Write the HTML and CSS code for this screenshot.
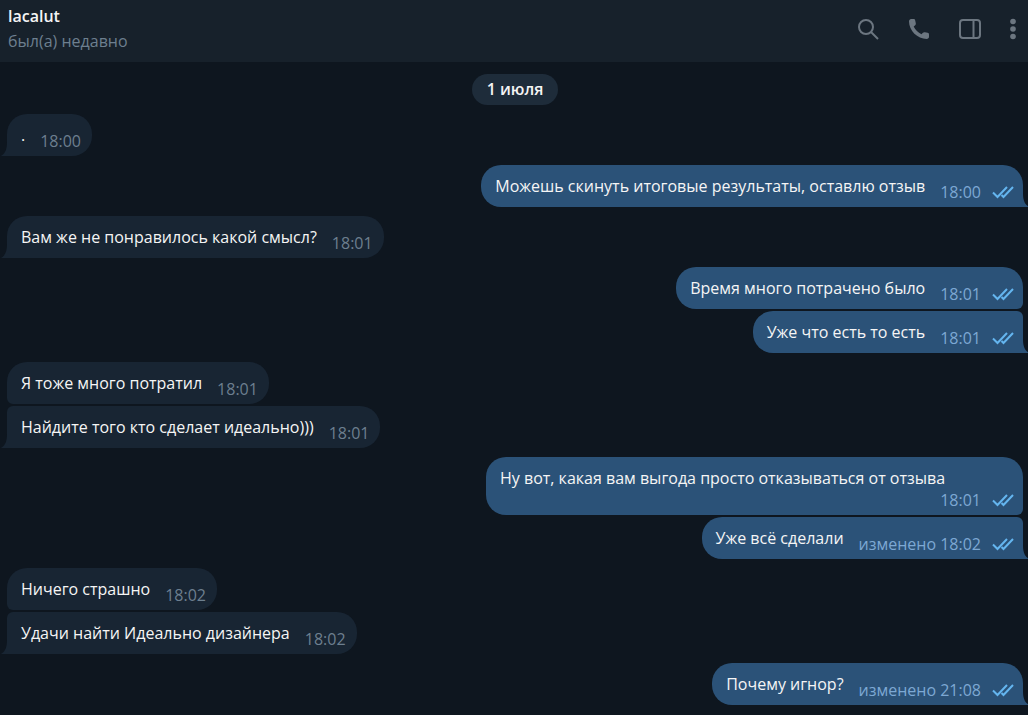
FILE: index.html
```html
<!DOCTYPE html>
<html lang="ru">
<head>
  <meta charset="UTF-8">
  <meta name="viewport" content="width=device-width, initial-scale=1">
  <title>lacalut</title>
  <link rel="stylesheet" href="styles.css">
</head>
<body>
  <!-- shared shapes -->
  <svg class="symbols" aria-hidden="true">
    <symbol id="checks" viewBox="0 0 22 14">
      <path d="M1 7.500l4.500 4.500L15 2M9.500 10l2 2L21 2" fill="none" stroke="currentColor" stroke-width="2"/>
    </symbol>
    <symbol id="tail" viewBox="0 0 8 14">
      <path d="M0 0h2c0 6 1 11 6 14H0z" fill="currentColor"/>
    </symbol>
  </svg>

  <header class="header">
    <div class="peer">
      <h1 class="peer-name">lacalut</h1>
      <p class="peer-status">был(а) недавно</p>
    </div>
    <div class="actions">
      <button type="button" class="icon-button" aria-label="Поиск">
        <svg width="24" height="24" viewBox="0 0 24 24" fill="none" stroke="currentColor" stroke-width="2">
          <circle cx="10" cy="10" r="7"/>
          <path d="M15 15l7 7"/>
        </svg>
      </button>
      <button type="button" class="icon-button" aria-label="Позвонить">
        <svg width="24" height="24" viewBox="0 0 24 24" fill="currentColor">
          <path d="M2 4.500C2 3 3 2 4.200 2h2.300c.9 0 1.500.5 1.700 1.400l.6 2.800c.2.800 0 1.500-.6 2L6.700 9.500c1.700 3.500 4.300 6.100 7.800 7.800l1.400-1.500c.5-.6 1.200-.8 2-.6l2.700.6c.9.200 1.400.8 1.400 1.700v2.300c0 1.300-1 2.200-2.300 2.200C10.500 22 2 13.500 2 4.500z"/>
        </svg>
      </button>
      <button type="button" class="icon-button" aria-label="Боковая панель">
        <svg width="24" height="24" viewBox="0 0 24 24" fill="none" stroke="currentColor" stroke-width="2">
          <rect x="2" y="3" width="20" height="18" rx="3"/>
          <path d="M15.500 3v18"/>
        </svg>
      </button>
      <button type="button" class="icon-button" aria-label="Меню">
        <svg width="8" height="24" viewBox="0 0 8 24" fill="currentColor">
          <circle cx="4" cy="4.500" r="2.800"/>
          <circle cx="4" cy="12" r="2.800"/>
          <circle cx="4" cy="19.500" r="2.800"/>
        </svg>
      </button>
    </div>
  </header>

  <main class="history">
    <div class="date">1 июля</div>

    <div class="group in">
      <div class="bubble">
        <p class="text">.</p>
        <div class="meta"><time>18:00</time></div>
        <svg class="tail"><use href="#tail"/></svg>
      </div>
    </div>

    <div class="group out">
      <div class="bubble">
        <p class="text">Можешь скинуть итоговые результаты, оставлю отзыв</p>
        <div class="meta"><time>18:00</time><svg class="checks"><use href="#checks"/></svg></div>
        <svg class="tail"><use href="#tail"/></svg>
      </div>
    </div>

    <div class="group in">
      <div class="bubble">
        <p class="text">Вам же не понравилось какой смысл?</p>
        <div class="meta"><time>18:01</time></div>
        <svg class="tail"><use href="#tail"/></svg>
      </div>
    </div>

    <div class="group out">
      <div class="bubble">
        <p class="text">Время много потрачено было</p>
        <div class="meta"><time>18:01</time><svg class="checks"><use href="#checks"/></svg></div>
      </div>
      <div class="bubble">
        <p class="text">Уже что есть то есть</p>
        <div class="meta"><time>18:01</time><svg class="checks"><use href="#checks"/></svg></div>
        <svg class="tail"><use href="#tail"/></svg>
      </div>
    </div>

    <div class="group in">
      <div class="bubble">
        <p class="text">Я тоже много потратил</p>
        <div class="meta"><time>18:01</time></div>
      </div>
      <div class="bubble">
        <p class="text">Найдите того кто сделает идеально)))</p>
        <div class="meta"><time>18:01</time></div>
        <svg class="tail"><use href="#tail"/></svg>
      </div>
    </div>

    <div class="group out">
      <div class="bubble bubble-wrapped">
        <p class="text">Ну вот, какая вам выгода просто отказываться от отзыва</p>
        <div class="meta"><time>18:01</time><svg class="checks"><use href="#checks"/></svg></div>
      </div>
      <div class="bubble">
        <p class="text">Уже всё сделали</p>
        <div class="meta"><span>изменено <time>18:02</time></span><svg class="checks"><use href="#checks"/></svg></div>
        <svg class="tail"><use href="#tail"/></svg>
      </div>
    </div>

    <div class="group in">
      <div class="bubble">
        <p class="text">Ничего страшно</p>
        <div class="meta"><time>18:02</time></div>
      </div>
      <div class="bubble">
        <p class="text">Удачи найти Идеально дизайнера</p>
        <div class="meta"><time>18:02</time></div>
        <svg class="tail"><use href="#tail"/></svg>
      </div>
    </div>

    <div class="group out">
      <div class="bubble">
        <p class="text">Почему игнор?</p>
        <div class="meta"><span>изменено <time>21:08</time></span><svg class="checks"><use href="#checks"/></svg></div>
        <svg class="tail"><use href="#tail"/></svg>
      </div>
    </div>
  </main>
</body>
</html>
```

FILE: styles.css
```css
* {
  box-sizing: border-box;
}

body {
  margin: 0;
  background-color: #0e161f;
  color: #f5f5f5;
  font-family: "Open Sans", "Noto Sans", sans-serif;
  font-size: 16px;
  line-height: 22px;
}

h1, p {
  margin: 0;
}

.symbols {
  display: none;
}

/* Header */
.header {
  display: flex;
  justify-content: space-between;
  align-items: center;
  height: 62px;
  padding: 0 11px 0 8px;
  background-color: #17212b;
}

.peer {
  padding-bottom: 4px;
}

.peer-name {
  font-size: 16px;
  font-weight: 600;
  line-height: 24px;
}

.peer-status {
  color: #6d7f8f;
  line-height: 26px;
}

.actions {
  display: flex;
  gap: 27px;
  padding-bottom: 4px;
}

.icon-button {
  display: flex;
  padding: 0;
  border: none;
  background: none;
  color: #6c7680;
  cursor: pointer;
}

.icon-button:hover {
  color: #a5b0ba;
}

/* Messages */
.history {
  display: flex;
  flex-direction: column;
  gap: 9px;
  padding: 12px 5px 10px 7px;
}

.date {
  align-self: center;
  padding: 4px 15px 5px;
  border-radius: 16px;
  background-color: #1e2c3a;
  font-weight: 600;
}

.group {
  display: flex;
  flex-direction: column;
  align-items: flex-start;
  gap: 2px;
}

.group.out {
  align-items: flex-end;
}

.bubble {
  position: relative;
  display: flex;
  flex-wrap: wrap;
  justify-content: space-between;
  align-items: flex-end;
  column-gap: 15px;
  max-width: 544px;
  padding: 10px 11px 4px 14px;
  border-radius: 20px;
  background-color: #182533;
}

.in .bubble {
  border-radius: 6px 20px 20px 6px;
}

.in .bubble:first-child {
  border-top-left-radius: 20px;
}

.in .bubble:last-child {
  border-bottom-left-radius: 0;
}

.out .bubble {
  padding-right: 9px;
  border-radius: 20px 6px 6px 20px;
  background-color: #2b5278;
}

.out .bubble:first-child {
  border-top-right-radius: 20px;
}

.out .bubble:last-child {
  border-bottom-right-radius: 0;
}

.text {
  margin-bottom: 6px;
}

/* time goes on its own line */
.bubble-wrapped {
  max-width: 537px;
}

.bubble-wrapped .text {
  margin-bottom: 0;
}

.meta {
  display: flex;
  align-items: center;
  gap: 11px;
  margin-left: auto;
  color: #6d7f8f;
}

.out .meta {
  color: #7da8d3;
}

.checks {
  width: 22px;
  height: 14px;
  color: #64b5ef;
}

.tail {
  position: absolute;
  bottom: 0;
  left: 100%;
  width: 8px;
  height: 14px;
  color: #2b5278;
}

.out .tail {
  margin-left: -2px;
}

.in .tail {
  left: auto;
  right: 100%;
  margin-right: -2px;
  color: #182533;
  transform: scaleX(-1);
}
```
